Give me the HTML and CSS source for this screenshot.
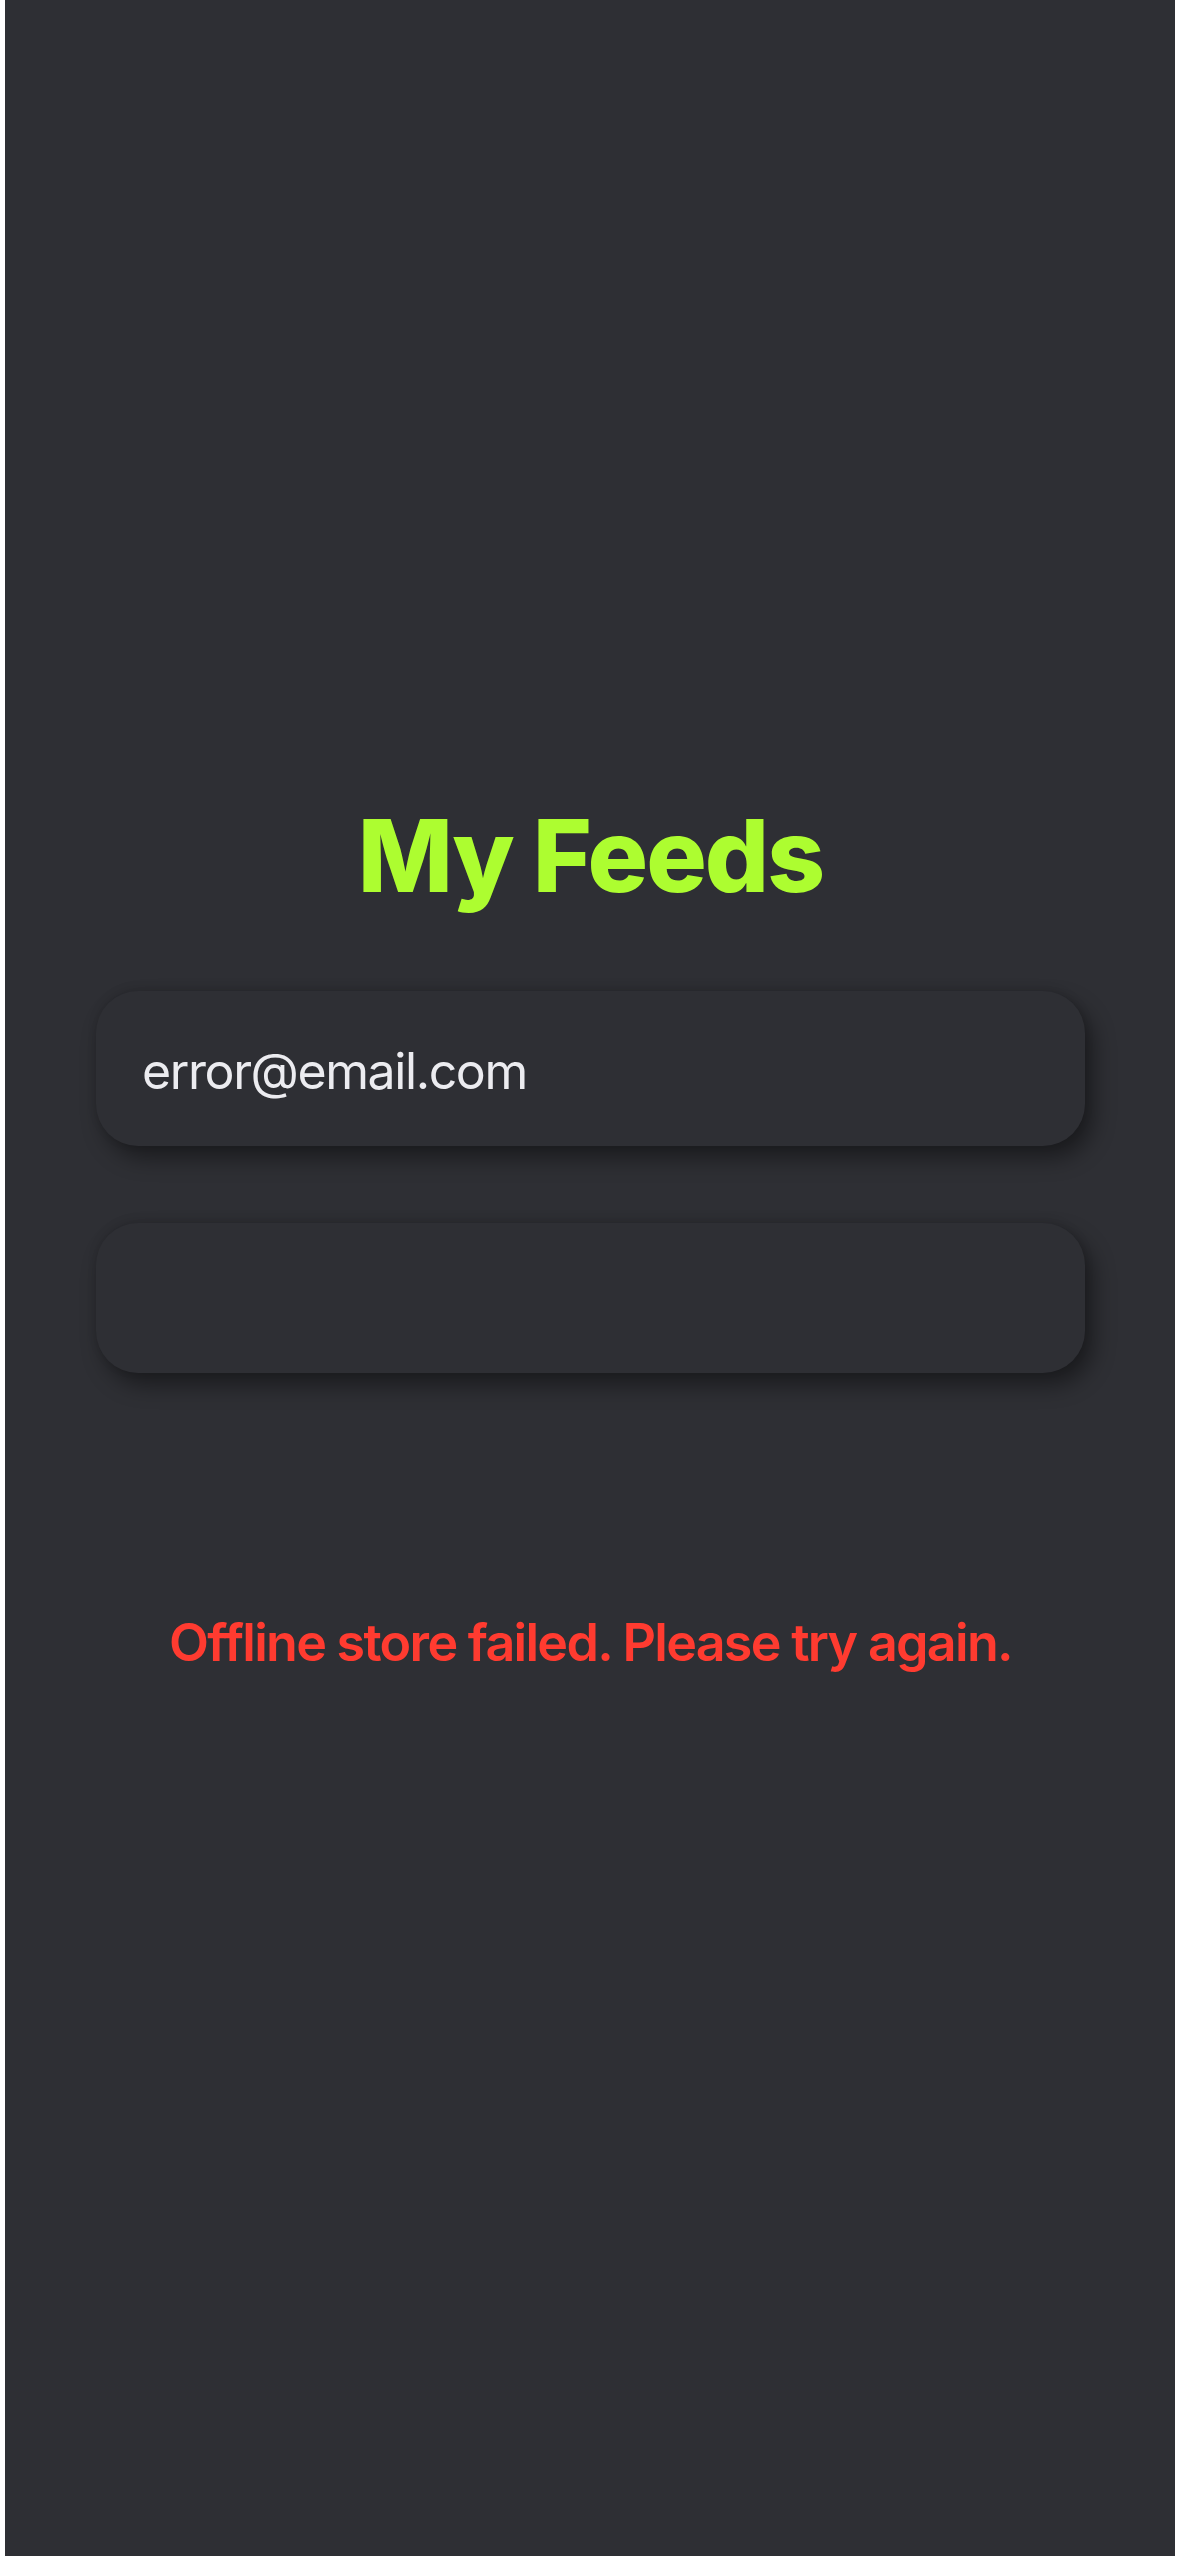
FILE: index.html
```html
<!DOCTYPE html>
<html lang="en">
<head>
<meta charset="utf-8">
<title>My Feeds</title>
<link rel="stylesheet" href="styles.css">
</head>
<body>
<main class="screen">
  <h1 class="title">My Feeds</h1>
  <div class="field field-email"><span class="field-text">error@email.com</span></div>
  <div class="field field-password"></div>
  <p class="error">Offline store failed. Please try again.</p>
</main>
</body>
</html>
```
FILE: styles.css
```css
html, body {
  margin: 0;
  padding: 0;
  background: #ffffff;
}
body {
  width: 1179px;
  height: 2556px;
  overflow: hidden;
  font-family: "Inter", "Liberation Sans", sans-serif;
}
.screen {
  box-sizing: border-box;
  margin: 0 4px 0 5px;
  height: 2556px;
  background: #2e2f34;
  padding: 794px 90px 0 91px;
  display: flex;
  flex-direction: column;
}
.title {
  margin: 0;
  font-size: 101px;
  line-height: 122px;
  font-weight: 800;
  color: #adfd30;
  text-align: center;
  letter-spacing: -2px;
}
.field {
  box-sizing: border-box;
  background: #2e2f34;
  border-radius: 42px;
  box-shadow: 8px 12px 22px rgba(0, 0, 0, 0.42), 0 -2px 10px rgba(0, 0, 0, 0.12);
  display: flex;
  align-items: center;
  padding: 4px 47px 0 46px;
}
.field-email {
  margin-top: 75px;
  height: 155px;
}
.field-password {
  margin-top: 77px;
  height: 150px;
}
.field-text {
  font-size: 50px;
  color: #ececf0;
  letter-spacing: -1.4px;
}
.error {
  margin: 235px 0 0 0;
  font-size: 52px;
  line-height: 70px;
  font-weight: 600;
  color: #ff3b30;
  text-align: center;
  letter-spacing: -1.7px;
}
```
